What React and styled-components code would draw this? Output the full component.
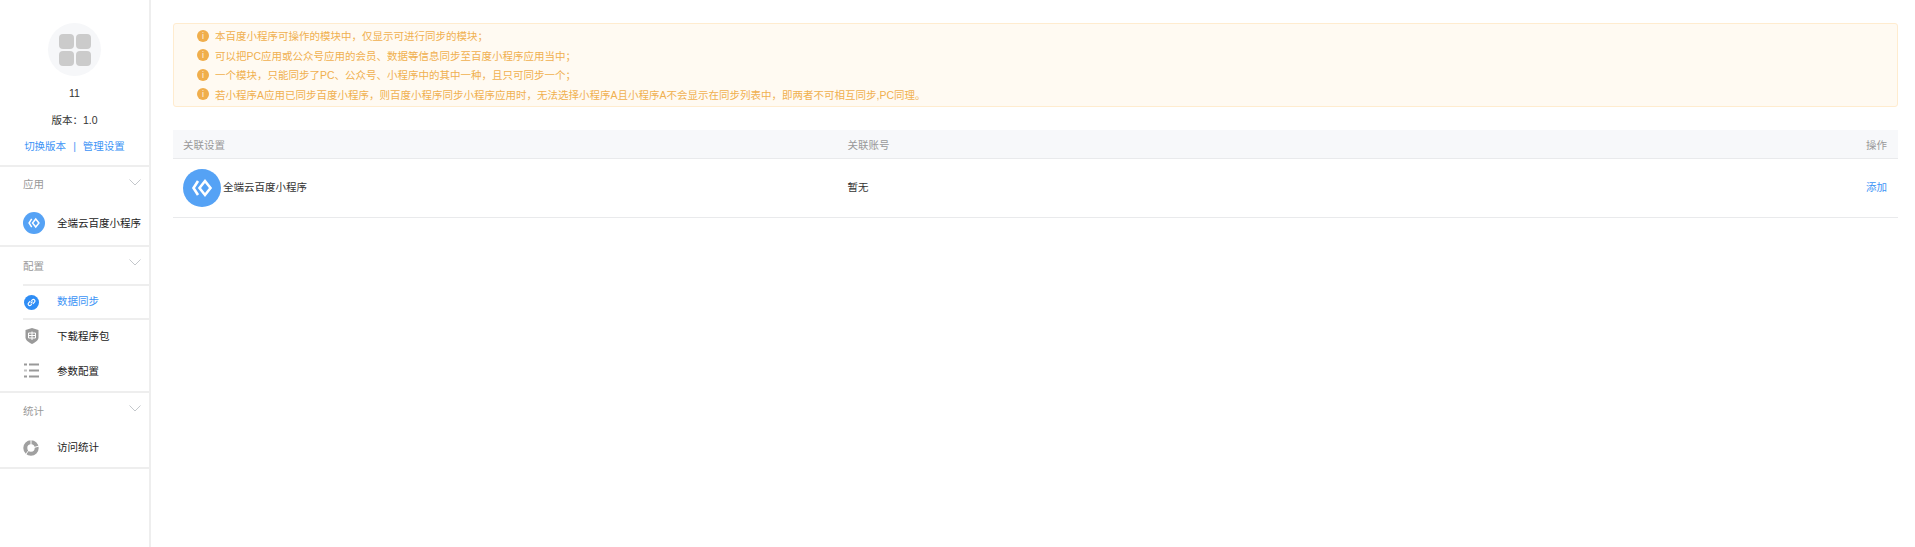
import React from 'react';
import styled, { createGlobalStyle } from 'styled-components';

const GlobalStyle = createGlobalStyle`
  html, body {
    margin: 0;
    padding: 0;
    height: 100%;
    background: #fff;
    font-family: "Liberation Sans", "Noto Sans CJK SC", sans-serif;
    font-size: 10.5px;
    color: #333;
  }
  #root {
    height: 100%;
  }
`;

const Page = styled.div`
  display: flex;
  height: 547px;
  overflow: hidden;
`;

const Sidebar = styled.aside`
  width: 151px;
  box-sizing: border-box;
  flex: none;
  border-right: 2px solid #eee;
`;

const Profile = styled.div`
  display: flex;
  flex-direction: column;
  align-items: center;
  padding-top: 23px;
  height: 167px;
  box-sizing: border-box;
  border-bottom: 2px solid #eee;
`;

const Avatar = styled.div`
  width: 53px;
  height: 53px;
  flex: none;
  border-radius: 50%;
  background: #f6f7f9;
  display: flex;
  align-items: center;
  justify-content: center;
`;

const AppName = styled.div`
  margin-top: 9px;
  line-height: 16px;
`;

const Version = styled.div`
  margin-top: 11px;
  line-height: 16px;
`;

const Links = styled.div`
  margin-top: 10px;
  line-height: 16px;
  color: #3d94f6;
  display: flex;
  gap: 7px;
`;

const Section = styled.section`
  border-bottom: 2px solid #eee;
  padding-bottom: ${p => p.$pad || 0}px;
`;

const SectionHead = styled.div`
  height: 37px;
  display: flex;
  align-items: center;
  justify-content: space-between;
  padding: 0 8px 0 23px;
  color: #999;

  svg {
    margin-top: -6px;
  }
`;

const Label = styled.span`
  margin-bottom: ${p => p.$lift || 0}px;
`;

const Item = styled.div`
  height: ${p => p.$h || 34}px;
  box-sizing: border-box;
  display: flex;
  align-items: center;
  margin-left: 23px;
  color: ${p => (p.$active ? '#3d94f6' : '#222')};
  border-top: ${p => (p.$lined ? '2px solid #eee' : '0')};
  border-bottom: ${p => (p.$lined ? '2px solid #eee' : '0')};
`;

const ItemIcon = styled.span`
  width: 34px;
  flex: none;
  display: flex;
  align-items: center;
`;

const Main = styled.main`
  flex: 1;
  min-width: 0;
  padding: 23px 17px 0 22px;
`;

const Notice = styled.div`
  height: 84px;
  box-sizing: border-box;
  padding: 2px 0 0 23px;
  background: #fffaf2;
  border: 1px solid #ffeccf;
  border-radius: 3px;
  color: #f0b04f;
`;

const NoticeLine = styled.div`
  display: flex;
  align-items: center;
  gap: 6px;
  height: 19.5px;
`;

const Dot = styled.span`
  width: 12px;
  height: 12px;
  flex: none;
  border-radius: 50%;
  background: #f0ae4c;
  color: #fff8e8;
  font-size: 9px;
  line-height: 12px;
  text-align: center;
`;

const TableWrap = styled.div`
  margin-top: 23px;
`;

const Row = styled.div`
  display: grid;
  grid-template-columns: 664.5px 1fr auto;
  align-items: center;
  padding: 0 11px 0 10px;
  height: ${p => p.$h}px;
  background: ${p => p.$bg || 'transparent'};
  color: ${p => p.$color || '#333'};
  border-bottom: 1.5px solid #e9eaec;
  box-sizing: border-box;
`;

const AppCell = styled.div`
  display: flex;
  align-items: center;
  gap: 2px;
`;

const AddLink = styled(Label)`
  color: #3d94f6;
`;

const LogoIcon = ({ size }) => (
  <svg width={size} height={size} viewBox="0 0 38 38">
    <circle cx="19" cy="19" r="19" fill="#55a2f5" />
    <path d="M15 12 10.500 19l4.500 7" fill="none" stroke="#fff" strokeWidth="2.600" />
    <path d="M22 12l5.500 7-5.500 7-5.500-7z" fill="none" stroke="#fff" strokeWidth="2.600" />
  </svg>
);

const GridIcon = () => (
  <svg width="32" height="32" viewBox="0 0 32 32" fill="#cbcbcb">
    <rect x="0" y="0" width="15" height="15" rx="4" />
    <rect x="17" y="0" width="15" height="15" rx="4" />
    <rect x="0" y="17" width="15" height="15" rx="4" />
    <rect x="17" y="17" width="15" height="15" rx="4" />
  </svg>
);

const Chevron = () => (
  <svg width="12" height="7" viewBox="0 0 12 7">
    <path d="M.5.5 6 6l5.500-5.500" fill="none" stroke="#c4c8cc" strokeWidth="1" />
  </svg>
);

const LinkIcon = () => (
  <svg width="15" height="15" viewBox="0 0 15 15" style={{ marginLeft: 1 }}>
    <circle cx="7.500" cy="7.500" r="7.500" fill="#2f8df5" />
    <path
      d="M6.700 8.300l1.800-1.800M6.300 6.200 4.600 7.900a1.500 1.500 0 0 0 2.200 2.200l1-1M8.800 8.800l1.700-1.700a1.500 1.500 0 0 0-2.200-2.200l-1 1"
      fill="none"
      stroke="#fff"
      strokeWidth="1.200"
    />
  </svg>
);

const ShieldIcon = () => (
  <svg width="14" height="16" viewBox="0 0 14 16" style={{ marginLeft: 2 }}>
    <path d="M7 0 13.500 2v7.500C13.500 12.500 10 14.500 7 16 4 14.500.5 12.500.5 9.500V2z" fill="#9a9a9a" />
    <path d="M3.500 5h7v5h-7zM7 3.500V12M3.500 7.500h7" fill="none" stroke="#fff" strokeWidth="1" />
  </svg>
);

const ListIcon = () => (
  <svg width="15" height="15" viewBox="0 0 15 15" fill="#999" style={{ marginLeft: 1 }}>
    <rect x="0" y="0.500" width="3" height="2" />
    <rect x="5" y="0.500" width="10" height="2" />
    <rect x="0" y="6.500" width="3" height="2" opacity="0.6" />
    <rect x="5" y="6.500" width="10" height="2" />
    <rect x="0" y="12.500" width="3" height="2" />
    <rect x="5" y="12.500" width="10" height="2" />
  </svg>
);

const DonutIcon = () => (
  <svg width="16" height="16" viewBox="0 0 16 16">
    <circle cx="8" cy="8" r="5.700" fill="none" stroke="#a0a0a0" strokeWidth="4" />
    <path d="M8 0v5M16 6l-5 1.500M3 14l3-4" stroke="#fff" strokeWidth="1" />
  </svg>
);

const notices = [
  '本百度小程序可操作的模块中，仅显示可进行同步的模块；',
  '可以把PC应用或公众号应用的会员、数据等信息同步至百度小程序应用当中；',
  '一个模块，只能同步了PC、公众号、小程序中的其中一种，且只可同步一个；',
  '若小程序A应用已同步百度小程序，则百度小程序同步小程序应用时，无法选择小程序A且小程序A不会显示在同步列表中，即两者不可相互同步,PC同理。',
];

const App = () => (
  <Page>
    <GlobalStyle />
    <Sidebar>
      <Profile>
        <Avatar>
          <GridIcon />
        </Avatar>
        <AppName>11</AppName>
        <Version>版本：1.0</Version>
        <Links>
          <span>切换版本</span>
          <span>|</span>
          <span>管理设置</span>
        </Links>
      </Profile>
      <Section $pad={4}>
        <SectionHead>
          <Label $lift={4}>应用</Label>
          <Chevron />
        </SectionHead>
        <Item $h={37}>
          <ItemIcon>
            <LogoIcon size={22} />
          </ItemIcon>
          全端云百度小程序
        </Item>
      </Section>
      <Section $pad={3}>
        <SectionHead>
          <span>配置</span>
          <Chevron />
        </SectionHead>
        <Item $h={36} $active $lined>
          <ItemIcon>
            <LinkIcon />
          </ItemIcon>
          <Label $lift={4}>数据同步</Label>
        </Item>
        <Item $h={32}>
          <ItemIcon>
            <ShieldIcon />
          </ItemIcon>
          <Label $lift={2}>下载程序包</Label>
        </Item>
        <Item $h={36}>
          <ItemIcon>
            <ListIcon />
          </ItemIcon>
          参数配置
        </Item>
      </Section>
      <Section $pad={1}>
        <SectionHead>
          <Label $lift={3}>统计</Label>
          <Chevron />
        </SectionHead>
        <Item $h={36}>
          <ItemIcon>
            <DonutIcon />
          </ItemIcon>
          <Label $lift={4}>访问统计</Label>
        </Item>
      </Section>
    </Sidebar>
    <Main>
      <Notice>
        {notices.map(text => (
          <NoticeLine key={text}>
            <Dot>i</Dot>
            {text}
          </NoticeLine>
        ))}
      </Notice>
      <TableWrap>
        <Row $h={29} $bg="#f7f8fa" $color="#999">
          <span>关联设置</span>
          <span>关联账号</span>
          <span>操作</span>
        </Row>
        <Row $h={59}>
          <AppCell>
            <LogoIcon size={38} />
            <Label $lift={4}>全端云百度小程序</Label>
          </AppCell>
          <Label $lift={4}>暂无</Label>
          <AddLink $lift={4}>添加</AddLink>
        </Row>
      </TableWrap>
    </Main>
  </Page>
);

export default App;
